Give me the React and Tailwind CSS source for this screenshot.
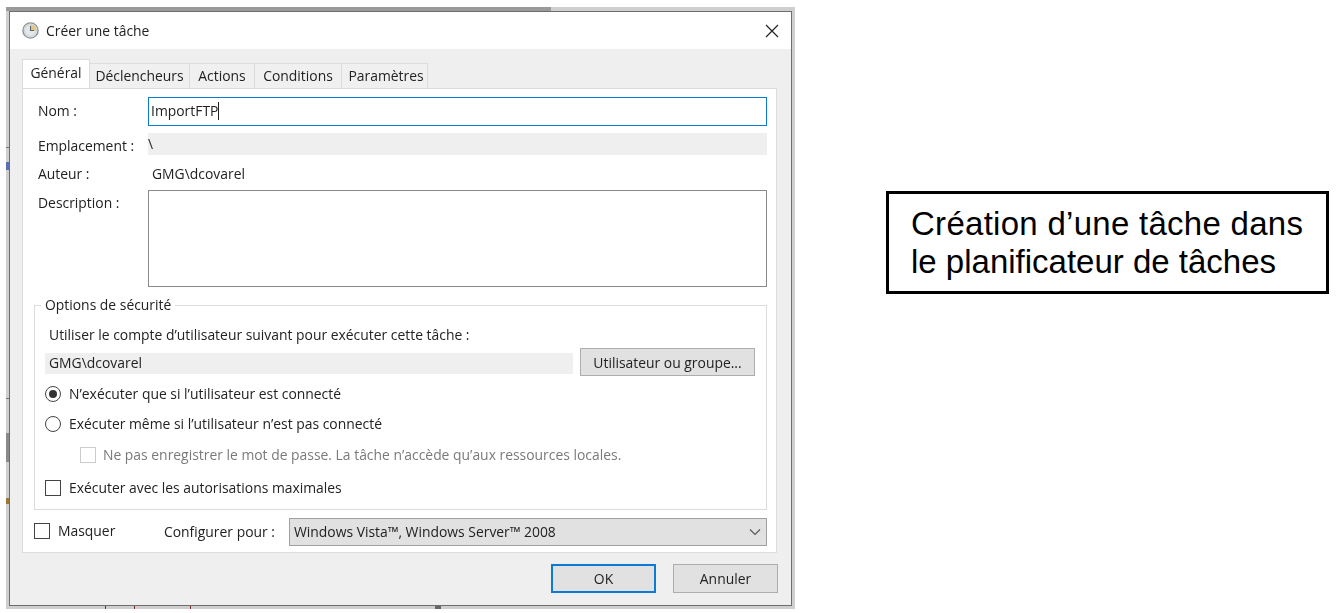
const dialogFont = { fontFamily: '"Open Sans", "Noto Sans", sans-serif' };

const ClockIcon = () => (
  <svg width="17" height="17" viewBox="0 0 17 17" className="shrink-0">
    <circle cx="8.5" cy="8.5" r="7.6" fill="#e4e8ea" stroke="#8d9499" strokeWidth="1.4" />
    <path d="M8.5 2.5 A6 6 0 0 1 14.5 8.5 L8.5 8.5 Z" fill="#e9c77e" />
    <circle cx="8.5" cy="8.5" r="5.8" fill="none" stroke="#b9bfc3" strokeWidth="0.6" />
    <path d="M8.5 4v4.5h3.6" fill="none" stroke="#5c6670" strokeWidth="1.1" />
  </svg>
);

const Radio = ({ checked }) => (
  <span className="flex h-4 w-4 shrink-0 items-center justify-center rounded-full border border-[#444]">
    {checked && <span className="h-2 w-2 rounded-full bg-[#333]" />}
  </span>
);

const Checkbox = ({ disabled }) => (
  <span className={`block h-4 w-4 shrink-0 border ${disabled ? "border-[#ccc]" : "border-[#444]"}`} />
);

const tabs = [
  { label: "Déclencheurs", width: "w-[100px]" },
  { label: "Actions", width: "w-[65px]" },
  { label: "Conditions", width: "w-[87px]" },
  { label: "Paramètres", width: "w-[86px] pl-[3px]" },
];

const FormRow = ({ label, labelClass, children }) => (
  <div className="flex">
    <div className={`w-[125px] shrink-0 pl-[15px] ${labelClass}`}>{label}</div>
    {children}
  </div>
);

const Dialog = () => (
  <div className="flex h-[595px] w-[783px] flex-col border border-[#6e6e6e] bg-[#efefef] blur-[0.35px]">
    {/* Title bar */}
    <div className="flex h-[37px] shrink-0 items-center justify-between bg-white pl-[12px] pr-[12px]">
      <div className="flex items-center gap-[7px]">
        <ClockIcon />
        <span className="text-[13.9px] leading-none text-[#222]">Créer une tâche</span>
      </div>
      <svg width="14" height="14" viewBox="0 0 14 14">
        <path d="M1 1l12 12M13 1L1 13" stroke="#222" strokeWidth="1.2" fill="none" />
      </svg>
    </div>

    <div className="flex flex-1 flex-col pl-[12px] pt-[11px]">
      {/* Tabs */}
      <div className="relative z-10 flex h-[28px] items-end text-[13.9px] text-[#222]">
        <div className="flex h-[29px] w-[68px] items-center justify-center border border-b-0 border-[#dcdcdc] bg-white pb-[1px]">
          Général
        </div>
        {tabs.map((t) => (
          <div
            key={t.label}
            className={`flex h-[25px] ${t.width} items-center justify-center border border-l-0 border-b-0 border-[#dcdcdc] bg-[#f0f0f0]`}
          >
            {t.label}
          </div>
        ))}
      </div>

      {/* Panel */}
      <div className="flex h-[465px] w-[755px] flex-col border border-[#dcdcdc] bg-white pt-[8px] text-[13.9px] text-[#222]">
        <FormRow label="Nom :" labelClass="pt-[4px] leading-[20px]">
          <div className="flex h-[29px] w-[619px] items-center border border-[#0c7bd6] pb-[2px] pl-[2px] leading-none">
            ImportFTP
            <span className="h-[18px] w-px bg-[#222]" />
          </div>
        </FormRow>
        <FormRow label="Emplacement :" labelClass="pt-[10px] leading-[20px] whitespace-nowrap">
          <div className="mt-[7px] h-[22px] w-[619px] bg-[#efefef] pt-[2px] leading-[18px]">\</div>
        </FormRow>
        <FormRow label="Auteur :" labelClass="pt-[8px] leading-[20px]">
          <div className="pl-[4px] pt-[8px] leading-[20px]">GMG\dcovarel</div>
        </FormRow>
        <FormRow label="Description :" labelClass="pt-[9px] leading-[20px]">
          <div className="mt-[6px] h-[97px] w-[619px] border border-[#8a8a8a]" />
        </FormRow>

        {/* Security group */}
        <div className="relative ml-[11px] mt-[18px] h-[205px] w-[733px] border border-[#dcdcdc] pl-[10px]">
          <div className="absolute -top-[11px] left-[6px] bg-white px-[4px] leading-[20px]">Options de sécurité</div>
          <div className="pl-[4px] pt-[19px] leading-[20px]">
            Utiliser le compte d’utilisateur suivant pour exécuter cette tâche :
          </div>
          <div className="mt-[3px] flex items-start">
            <div className="mt-[5px] h-[21px] w-[528px] bg-[#efefef] pl-[4px] leading-[20px]">GMG\dcovarel</div>
            <button className="ml-[7px] h-[28px] w-[175px] border border-[#adadad] bg-[#e1e1e1] pt-[2px] leading-none">
              Utilisateur ou groupe...
            </button>
          </div>
          <div className="mt-[8px] flex h-[20px] items-center gap-[8px]">
            <Radio checked />
            N’exécuter que si l’utilisateur est connecté
          </div>
          <div className="mt-[10px] flex h-[20px] items-center gap-[8px]">
            <Radio />
            Exécuter même si l’utilisateur n’est pas connecté
          </div>
          <div className="ml-[35px] mt-[11px] flex h-[20px] items-center gap-[7px] text-[#7a7a7a]">
            <Checkbox disabled />
            Ne pas enregistrer le mot de passe. La tâche n’accède qu’aux ressources locales.
          </div>
          <div className="mt-[13px] flex h-[20px] items-center gap-[8px]">
            <Checkbox />
            Exécuter avec les autorisations maximales
          </div>
        </div>

        {/* Bottom row */}
        <div className="mt-[8px] flex items-center pl-[11px]">
          <div className="flex w-[130px] items-center gap-[8px] pb-[2px]">
            <Checkbox />
            Masquer
          </div>
          <div className="w-[125px]">Configurer pour :</div>
          <div className="flex h-[28px] w-[478px] items-center justify-between border border-[#a0a0a0] bg-[#e1e1e1] pl-[4px] pr-[5px]">
            Windows Vista™, Windows Server™ 2008
            <svg width="12" height="8" viewBox="0 0 12 8">
              <path d="M1 1.5l5 5 5-5" stroke="#555" strokeWidth="1.1" fill="none" />
            </svg>
          </div>
        </div>
      </div>

      {/* Buttons */}
      <div className="mt-[11px] flex w-[755px] justify-end text-[13.9px] text-[#222]">
        <button className="h-[29px] w-[105px] border-2 border-[#0c7bd6] bg-[#e1e1e1] leading-none">OK</button>
        <button className="-mr-px ml-[17px] h-[29px] w-[105px] border border-[#adadad] bg-[#e1e1e1] leading-none">
          Annuler
        </button>
      </div>
    </div>
  </div>
);

export default function App() {
  return (
    <div className="flex h-[613px] w-[1336px] overflow-hidden bg-white" style={dialogFont}>
      {/* Window shadow and the bits of the window behind it */}
      <div className="relative ml-[6px] mt-[7px] h-[602px] w-[789px] self-start bg-[#cfcfcf] pl-[3px] pt-[4px]">
        <div className="absolute left-0 top-0 h-[4px] w-[545px] bg-[#9a9a9a]" />
        <div className="absolute left-[99px] bottom-0 h-[3px] w-px bg-[#7a2a2a]" />
        <div className="absolute left-[128px] bottom-0 h-[3px] w-px bg-[#7a2a2a]" />
        <div className="absolute left-[184px] bottom-0 h-[3px] w-px bg-[#7a2a2a]" />
        <div className="absolute left-[429px] bottom-0 h-[3px] w-[6px] bg-[#666]" />
        <div className="absolute left-0 top-[140px] h-px w-[3px] bg-[#777]" />
        <div className="absolute left-0 top-[155px] h-[8px] w-[3px] bg-[#5a6fb0]" />
        <div className="absolute left-0 top-[391px] h-px w-[3px] bg-[#777]" />
        <div className="absolute left-0 top-[426px] h-[29px] w-[3px] bg-[#8a8a8a]" />
        <div className="absolute left-0 top-[491px] h-[6px] w-[3px] bg-[#9a7a3a]" />
        <Dialog />
      </div>

      {/* Caption */}
      <div className="ml-[91px] mt-[191px] h-[103px] w-[443px] self-start border-[3px] border-black pl-[22px] pt-[11px] text-[33px] leading-[38px] text-black [font-family:'Liberation_Sans',Arial,sans-serif]">
        <span className="tracking-[0.28px]">Création d’une tâche dans</span>
        <br />
        le planificateur de tâches
      </div>
    </div>
  );
}
